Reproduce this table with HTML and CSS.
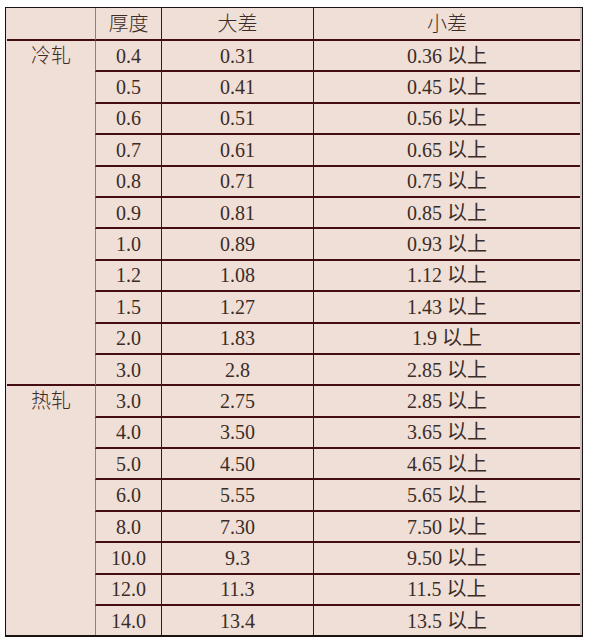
FILE: index.html
```html
<!DOCTYPE html>
<html lang="zh-CN">
<head>
<meta charset="utf-8">
<title>厚度 大差 小差</title>
<link rel="stylesheet" href="styles.css">
</head>
<body>
<div class="sheet">
  <div class="grid">
    <div class="c head c1"></div>
    <div class="c head c2">厚度</div>
    <div class="c head c3">大差</div>
    <div class="c head c4">小差</div>

    <div class="sec cold">冷轧</div>
    <div class="c c2">0.4</div><div class="c c3">0.31</div><div class="c c4">0.36 以上</div>
    <div class="c c2">0.5</div><div class="c c3">0.41</div><div class="c c4">0.45 以上</div>
    <div class="c c2">0.6</div><div class="c c3">0.51</div><div class="c c4">0.56 以上</div>
    <div class="c c2">0.7</div><div class="c c3">0.61</div><div class="c c4">0.65 以上</div>
    <div class="c c2">0.8</div><div class="c c3">0.71</div><div class="c c4">0.75 以上</div>
    <div class="c c2">0.9</div><div class="c c3">0.81</div><div class="c c4">0.85 以上</div>
    <div class="c c2">1.0</div><div class="c c3">0.89</div><div class="c c4">0.93 以上</div>
    <div class="c c2">1.2</div><div class="c c3">1.08</div><div class="c c4">1.12 以上</div>
    <div class="c c2">1.5</div><div class="c c3">1.27</div><div class="c c4">1.43 以上</div>
    <div class="c c2">2.0</div><div class="c c3">1.83</div><div class="c c4">1.9 以上</div>
    <div class="c c2">3.0</div><div class="c c3">2.8</div><div class="c c4">2.85 以上</div>

    <div class="sec hot">热轧</div>
    <div class="c c2">3.0</div><div class="c c3">2.75</div><div class="c c4">2.85 以上</div>
    <div class="c c2">4.0</div><div class="c c3">3.50</div><div class="c c4">3.65 以上</div>
    <div class="c c2">5.0</div><div class="c c3">4.50</div><div class="c c4">4.65 以上</div>
    <div class="c c2">6.0</div><div class="c c3">5.55</div><div class="c c4">5.65 以上</div>
    <div class="c c2">8.0</div><div class="c c3">7.30</div><div class="c c4">7.50 以上</div>
    <div class="c c2">10.0</div><div class="c c3">9.3</div><div class="c c4">9.50 以上</div>
    <div class="c c2">12.0</div><div class="c c3">11.3</div><div class="c c4">11.5 以上</div>
    <div class="c c2 last">14.0</div><div class="c c3 last">13.4</div><div class="c c4 last">13.5 以上</div>
  </div>
</div>
</body>
</html>
```

FILE: styles.css
```css
html, body {
  margin: 0;
  padding: 0;
  background: #ffffff;
}

body {
  font-family: "Liberation Serif", "Noto Sans CJK SC", serif;
  font-size: 20px;
  color: #3b2c28;
}

.sheet {
  margin: 7px 0 0 5px;
  width: 578px;
  box-sizing: border-box;
  border-top: 1px solid #1a1210;
  border-left: 1px solid #1a1210;
  border-right: 1px solid #1a1210;
  border-bottom: 2px solid #1a1210;
  background: #efdfd6;
}

.grid {
  display: grid;
  grid-template-columns: 88px 66px 152px 1fr;
  grid-template-rows: 33px repeat(18, 31.4px) 29px;
  border-right: 2px solid #cdc3be;
  border-left: 1px solid #e6dcd8;
}

.c {
  box-sizing: border-box;
  display: flex;
  align-items: center;
  justify-content: center;
  border-bottom: 2px solid #440d13;
  line-height: 1;
  white-space: nowrap;
}

.c.last {
  border-bottom: none;
}

.head {
  font-weight: 300;
}

.c2 {
  border-left: 1px solid #8f817b;
}

.c3,
.c4 {
  border-left: 1.5px solid #3a1a16;
}

.sec {
  box-sizing: border-box;
  text-align: center;
  line-height: 30px;
  font-weight: 300;
}

.cold {
  grid-row: span 11;
  border-bottom: 2px solid #440d13;
}

.hot {
  grid-row: span 8;
}
```
